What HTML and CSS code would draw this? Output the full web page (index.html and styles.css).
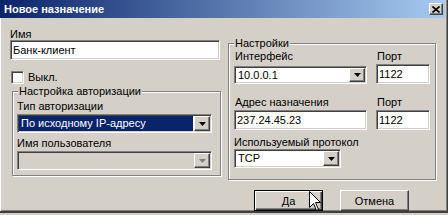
FILE: index.html
```html
<!DOCTYPE html>
<html lang="ru">
<head>
    <meta charset="UTF-8">
    <title>Новое назначение</title>
    <link rel="stylesheet" href="styles.css">
</head>
<body>
    <div class="window">
        <div class="titlebar">
            <span class="title">Новое назначение</span>
            <span class="close-btn">
                <svg width="8" height="7" viewBox="0 0 8 7"><path d="M0.5 0.5 L7.5 6.5 M7.5 0.5 L0.5 6.5" stroke="#000" stroke-width="1.6"/></svg>
            </span>
        </div>

        <div class="dialog-body">
            <div class="col-left">
                <div class="label">Имя</div>
                <div class="edit">Банк-клиент</div>
                <div class="check-row"><span class="checkbox"></span>Выкл.</div>

                <div class="group group-auth">
                    <span class="legend">Настройка авторизации</span>
                    <div class="label">Тип авторизации</div>
                    <div class="combo focused">
                        <span class="combo-text">По исходному IP-адресу</span>
                        <span class="combo-btn"><svg width="7" height="4" viewBox="0 0 7 4"><path d="M0 0 H7 L3.5 4 Z" fill="#000"/></svg></span>
                    </div>
                    <div class="label gap-top">Имя пользователя</div>
                    <div class="combo disabled">
                        <span class="combo-text"></span>
                        <span class="combo-btn"><svg width="7" height="4" viewBox="0 0 7 4"><path d="M0 0 H7 L3.5 4 Z" fill="#808080"/></svg></span>
                    </div>
                </div>
            </div>

            <div class="col-right">
                <div class="group group-settings">
                    <span class="legend">Настройки</span>
                    <div class="field-grid">
                        <div class="label">Интерфейс</div>
                        <div class="label">Порт</div>
                        <div class="combo short">
                            <span class="combo-text">10.0.0.1</span>
                            <span class="combo-btn"><svg width="7" height="4" viewBox="0 0 7 4"><path d="M0 0 H7 L3.5 4 Z" fill="#000"/></svg></span>
                        </div>
                        <div class="edit">1122</div>

                        <div class="label row2">Адрес назначения</div>
                        <div class="label row2">Порт</div>
                        <div class="edit">237.24.45.23</div>
                        <div class="edit">1122</div>
                    </div>
                    <div class="label proto-label">Используемый протокол</div>
                    <div class="combo proto">
                        <span class="combo-text">TCP</span>
                        <span class="combo-btn"><svg width="7" height="4" viewBox="0 0 7 4"><path d="M0 0 H7 L3.5 4 Z" fill="#000"/></svg></span>
                    </div>
                </div>

                <div class="buttons">
                    <span class="btn default"><u>Д</u>а</span>
                    <span class="btn">Отмена</span>
                </div>
            </div>
        </div>

        <svg class="cursor" width="13" height="21" viewBox="0 0 13 21">
            <path d="M0.5 0.5 V16.5 L4.5 12.5 L7.5 19.5 L9.5 18.5 L6.5 11.5 H11.5 Z" fill="#fff" stroke="#000" stroke-width="1"/>
        </svg>
    </div>
</body>
</html>
```

FILE: styles.css
```css
html, body {
    margin: 0;
    padding: 0;
    background-color: #d4d0c8;
}
body {
    font-family: "Liberation Sans", Arial, sans-serif;
    font-size: 11px;
    color: #000;
}
.window {
    position: relative;
    width: 448px;
    height: 213px;
    box-sizing: border-box;
    background-color: #d4d0c8;
    border-right: 1px solid #404040;
    border-bottom: 2px solid #404040;
    box-shadow: inset 1px 0 0 #fff, inset -1px -1px 0 #808080;
    overflow: hidden;
}
.titlebar {
    height: 18px;
    margin-right: 2px;
    padding: 0 2px 0 4px;
    display: flex;
    align-items: center;
    justify-content: space-between;
    background: linear-gradient(to right, #0a246a, #a6caf0);
}
.title {
    color: #fff;
    font-weight: bold;
    font-size: 11px;
    line-height: 14px;
}
.close-btn {
    width: 14px;
    height: 12px;
    box-sizing: border-box;
    background: #d4d0c8;
    border: 1px solid;
    border-color: #fff #404040 #404040 #fff;
    box-shadow: inset -1px -1px 0 #808080;
    display: flex;
    align-items: center;
    justify-content: center;
}

.dialog-body {
    display: flex;
    padding: 10px 0 0 10px;
}
.col-left {
    width: 211px;
}
.col-right {
    width: 208px;
    margin-left: 7px;
}

.label {
    line-height: 12px;
    height: 12px;
    white-space: nowrap;
}
.label.gap-top {
    margin-top: 4px;
}

.edit {
    height: 20px;
    box-sizing: border-box;
    background: #fff;
    border: 1px solid;
    border-color: #808080 #fff #fff #808080;
    box-shadow: inset 1px 1px 0 #404040, inset -1px -1px 0 #d4d0c8;
    padding: 0 2px;
    line-height: 18px;
    white-space: nowrap;
    overflow: hidden;
}
.col-left > .edit {
    width: 210px;
}

.check-row {
    margin-top: 11px;
    height: 13px;
    display: flex;
    align-items: center;
    gap: 4px;
    line-height: 13px;
}
.checkbox {
    width: 13px;
    height: 13px;
    margin-left: 1px;
    box-sizing: border-box;
    background: #fff;
    border: 1px solid;
    border-color: #808080 #fff #fff #808080;
    box-shadow: inset 1px 1px 0 #404040, inset -1px -1px 0 #d4d0c8;
}

.group {
    position: relative;
    box-sizing: border-box;
    border: 1px solid #808080;
    box-shadow: 1px 1px 0 #fff, inset 1px 1px 0 #fff;
}
.legend {
    position: absolute;
    top: -7px;
    left: 5px;
    padding: 0 1px;
    line-height: 12px;
    background: #d4d0c8;
    white-space: nowrap;
}
.group-auth {
    margin: 7px 0 0 2px;
    width: 209px;
    padding: 8px 8px 5px 4px;
}
.group-settings {
    margin-top: 15px;
    width: 208px;
    padding: 6px 0 11px 5px;
}

.combo {
    height: 19px;
    box-sizing: border-box;
    display: flex;
    background: #fff;
    border: 1px solid;
    border-color: #808080 #fff #fff #808080;
    box-shadow: inset 1px 1px 0 #404040, inset -1px -1px 0 #d4d0c8;
    padding: 1px;
    margin-top: 2px;
}
.combo-text {
    flex: 1;
    padding-left: 2px;
    line-height: 15px;
    white-space: nowrap;
    overflow: hidden;
}
.combo.focused .combo-text {
    background: #0a246a;
    color: #fff;
    margin-right: 1px;
}
.combo.disabled {
    background: #d4d0c8;
}
.combo-btn {
    width: 16px;
    box-sizing: border-box;
    background: #d4d0c8;
    border: 1px solid;
    border-color: #fff #404040 #404040 #fff;
    box-shadow: inset -1px -1px 0 #808080;
    display: flex;
    align-items: center;
    justify-content: center;
}

.field-grid {
    display: grid;
    grid-template-columns: 133px 54px;
    column-gap: 9px;
    row-gap: 2px;
}
.field-grid .combo {
    height: 18px;
    margin-top: 0;
    align-self: end;
}
.field-grid .label {
    margin-left: 1px;
}
.label.row2 {
    margin-top: 10px;
}
.proto-label {
    margin-top: 6px;
}
.combo.proto {
    width: 107px;
    margin-top: 1px;
}

.buttons {
    display: flex;
    gap: 17px;
    margin-top: 10px;
    padding-left: 26px;
}
.btn {
    width: 69px;
    height: 21px;
    box-sizing: border-box;
    background: #d4d0c8;
    border: 1px solid;
    border-color: #fff #404040 #404040 #fff;
    box-shadow: inset -1px -1px 0 #808080;
    display: flex;
    align-items: center;
    justify-content: center;
}
.btn.default {
    border-color: #000;
    box-shadow: inset 1px 1px 0 #fff, inset -1px -1px 0 #404040, inset -2px -2px 0 #808080;
}
.btn u {
    text-decoration: none;
}

.cursor {
    position: absolute;
    left: 309px;
    top: 191px;
}
```
